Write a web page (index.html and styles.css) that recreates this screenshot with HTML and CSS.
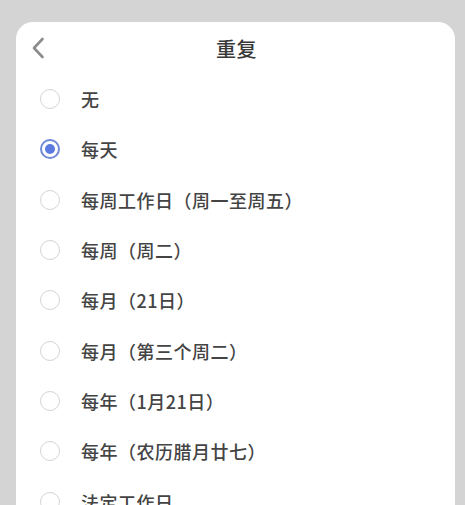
FILE: index.html
```html
<!DOCTYPE html>
<html lang="zh-CN">
<head>
  <meta charset="UTF-8">
  <meta name="viewport" content="width=device-width, initial-scale=1.0">
  <title>重复</title>
  <link rel="stylesheet" href="styles.css">
</head>
<body>
  <div class="sheet">
    <div class="sheet-header">
      <svg class="back" width="14" height="22" viewBox="0 0 14 22">
        <path d="M11.5 2 L3 11 L11.5 20" fill="none" stroke="#8c8c8c" stroke-width="2.6" stroke-linecap="round" stroke-linejoin="round"/>
      </svg>
      <h1>重复</h1>
    </div>
    <ul class="options">
      <li><span class="radio"></span>无</li>
      <li><span class="radio checked"></span>每天</li>
      <li><span class="radio"></span>每周工作日（周一至周五）</li>
      <li><span class="radio"></span>每周（周二）</li>
      <li><span class="radio"></span>每月（21日）</li>
      <li><span class="radio"></span>每月（第三个周二）</li>
      <li><span class="radio"></span>每年（1月21日）</li>
      <li><span class="radio"></span>每年（农历腊月廿七）</li>
      <li><span class="radio"></span>法定工作日</li>
    </ul>
  </div>
</body>
</html>
```

FILE: styles.css
```css
html, body { margin: 0; padding: 0; }
body { background: #d4d4d4; font-family: "Noto Sans CJK SC", "Noto Sans", sans-serif; height: 505px; overflow: hidden; padding: 22px 0 0 16px; box-sizing: border-box; }
.sheet { width: 439px; height: 600px; background: #fff; border-radius: 17px 17px 0 0; }
.sheet-header { position: relative; height: 52px; display: flex; align-items: center; justify-content: center; }
.sheet-header h1 { margin: 0; font-size: 20px; font-weight: 500; color: #383838; letter-spacing: 0.5px; padding-left: 2px; }
.back { position: absolute; left: 15px; top: 15px; }
.options { list-style: none; margin: 0; padding: 0; }
.options li { height: 50.3px; display: flex; align-items: center; padding-left: 24px; font-size: 18px; font-weight: 500; color: #444; letter-spacing: 0.5px; }
.radio { width: 20px; height: 20px; box-sizing: border-box; border: 1.8px solid #d4d4d4; border-radius: 50%; margin-right: 21px; flex: none; position: relative; }
.radio.checked { border: 2px solid #7088d8; }
.radio.checked::after { content: ""; position: absolute; left: 3px; top: 3px; width: 10px; height: 10px; border-radius: 50%; background: #5c7be0; }
```
